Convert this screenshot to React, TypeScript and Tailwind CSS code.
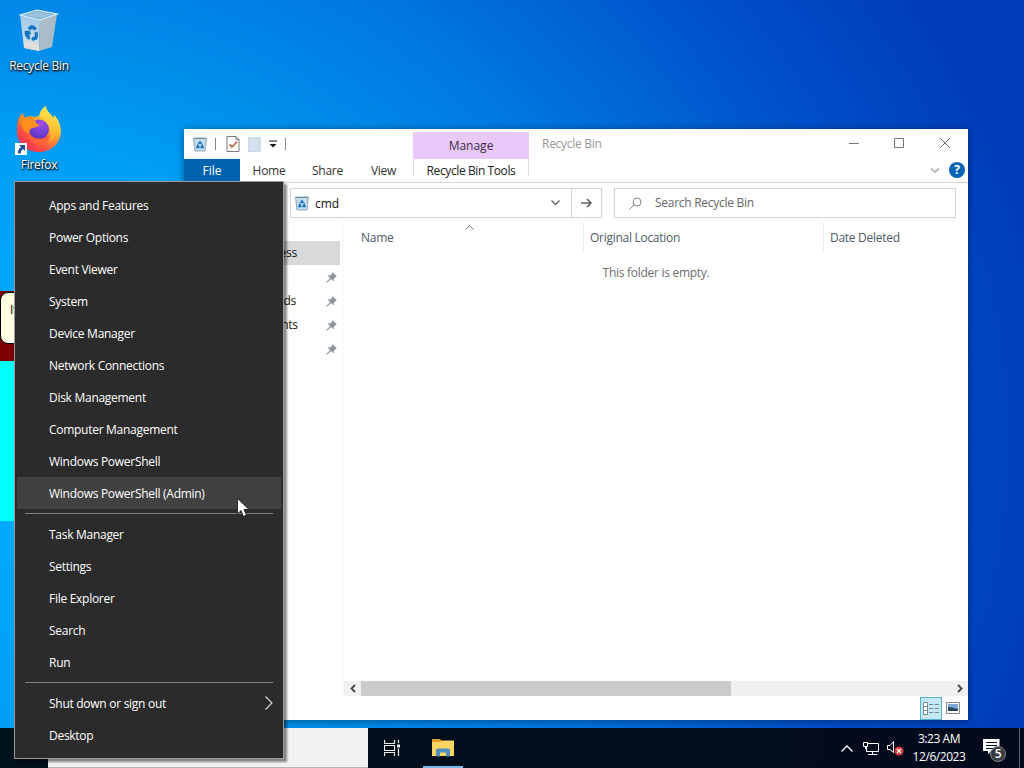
import type { ReactNode } from 'react';

type MenuRow = { label: string; active?: boolean; submenu?: boolean };

const menuGroups: MenuRow[][] = [
  [
    { label: 'Apps and Features' },
    { label: 'Power Options' },
    { label: 'Event Viewer' },
    { label: 'System' },
    { label: 'Device Manager' },
    { label: 'Network Connections' },
    { label: 'Disk Management' },
    { label: 'Computer Management' },
    { label: 'Windows PowerShell' },
    { label: 'Windows PowerShell (Admin)', active: true },
  ],
  [
    { label: 'Task Manager' },
    { label: 'Settings' },
    { label: 'File Explorer' },
    { label: 'Search' },
    { label: 'Run' },
  ],
  [{ label: 'Shut down or sign out', submenu: true }, { label: 'Desktop' }],
];

const pinned = ['Desktop', 'Downloads', 'Documents', 'Pictures'];

const RecycleBinIcon = () => (
  <svg width="40" height="44" viewBox="0 0 40 44">
    <defs>
      <linearGradient id="binFront" x1="0" y1="0" x2="0" y2="1">
        <stop offset="0" stopColor="#9cc9e8" />
        <stop offset="0.6" stopColor="#c3d9e6" />
        <stop offset="1" stopColor="#d6dadb" />
      </linearGradient>
    </defs>
    <path d="M1 6 L21 11 L20 42 L5 39 Z" fill="url(#binFront)" />
    <path d="M21 11 L38 5 L33 38 L20 42 Z" fill="#a9bcc8" />
    <path d="M1 6 L18 1 L38 5 L21 11 Z" fill="#79b4dc" stroke="#e2eff7" strokeWidth="1.1" />
    <path d="M6 6 L18 3 L33 5.400 L21 9 Z" fill="#9cc3dc" />
    <path d="M5 32 L20 35 L20 42 L5 39 Z" fill="#e3e1dd" opacity="0.7" />
    <g fill="#1674c5">
      <path d="M8.500 19 L12 16 L16 17 L18 20 L15 21.500 L13 19.500 L11.500 21.500 Z" />
      <path d="M5.500 22 L10.500 21.500 L12.500 25.500 L10.300 25 L11.300 30 L9 30.500 L6 26.500 Z" />
      <path d="M13 28.500 L16 27 L15.500 23.500 L18.500 22.500 L19 27.500 L17.500 31 L15 31 L15 32.500 L12.300 30.500 Z" />
    </g>
  </svg>
);

const FirefoxIcon = () => (
  <svg width="48" height="50" viewBox="0 0 48 50">
    <defs>
      <linearGradient id="fxBody" x1="0.85" y1="0.1" x2="0.2" y2="0.95">
        <stop offset="0" stopColor="#fff44f" />
        <stop offset="0.3" stopColor="#ffbd2e" />
        <stop offset="0.58" stopColor="#ff7139" />
        <stop offset="0.85" stopColor="#fb4048" />
        <stop offset="1" stopColor="#ee2a62" />
      </linearGradient>
      <radialGradient id="fxGlobe" cx="0.6" cy="0.2" r="0.8">
        <stop offset="0" stopColor="#a24ce0" />
        <stop offset="0.6" stopColor="#7542d5" />
        <stop offset="1" stopColor="#5a2fc0" />
      </radialGradient>
      <linearGradient id="fxFlame" x1="0.5" y1="0" x2="0.5" y2="1">
        <stop offset="0" stopColor="#ffe94a" />
        <stop offset="1" stopColor="#ffa42b" />
      </linearGradient>
    </defs>
    <path
      d="M3 15 C4 12 6 10 8 8 C8 10 9 12 10 13 C13 11 16 11 19 12 C22 12 24 11 24.500 10 C25 6 28 3 30.500 1 C31 5 34 8 37 11 L38 14 L39 10 C43 14 46 20 46 27 C45 39 36 47 24 47 C11 47 2 38 2 26 C2 22 2 18 3 15 Z"
      fill="url(#fxBody)"
    />
    <path d="M24.500 11 C25 6 28 3 30.500 1 C31 7 39 10 41 19 C43 28 39 35 33 39 C37 32 37 23 31 17 C29 14 26 14 24.500 11 Z" fill="url(#fxFlame)" opacity="0.85" />
    <circle cx="24" cy="24.500" r="10" fill="url(#fxGlobe)" />
    <path d="M4 14 L8 9 C9 12 11 14 14 14 L17 10 C17 13 18 15 21 16 C20 17 21 19 25 20 C22 22 20 23 17 23 C14 25 14 27 14 29 C9 27 5 20 4 14 Z" fill="#ff8f20" />
    <path d="M13 26 C16 34 27 37 35 29 C33 38 26 41 20 39 C16 37 13 32 13 26 Z" fill="#ff6236" />
  </svg>
);

const SmallBin = () => (
  <svg width="14" height="15" viewBox="0 0 14 15">
    <path d="M0.500 1 H13.500 L12 14 H2 Z" fill="#c4dbe9" stroke="#8eaabd" />
    <path d="M1 1.500 H13" stroke="#6c8ea6" />
    <path d="M5 7 L7 4 L9 7 L7.500 7 L7 6 L6.500 7 Z M3.500 11 L4.500 7.500 L6.300 9 L5.500 9.800 L6.500 11 Z M10.500 11 L9.500 7.500 L7.800 9 L8.500 9.800 L7.500 11 Z" fill="#0d6ebd" stroke="#0d6ebd" strokeWidth="0.5" />
  </svg>
);

const Pin = () => (
  <svg width="11" height="11" viewBox="0 0 11 11">
    <path d="M6.500 0 L11 4.500 L9.500 5 L7.800 6.800 L7.500 9.500 L5 7 L1 10.800 L0.300 10 L4 6 L1.500 3.500 L4.500 3.200 L6.200 1.500 Z" fill="#8b969b" />
  </svg>
);

const DesktopIcon = ({ label, children }: { label: string; children: ReactNode }) => (
  <div className="flex w-[78px] flex-col items-center">
    {children}
    <span className="text-[12px] leading-4 whitespace-nowrap text-white [text-shadow:1px_1px_2px_#000,0_1px_2px_#000]">
      {label}
    </span>
  </div>
);

const TitleBar = () => (
  <div className="flex h-[30px] shrink-0 items-stretch">
    <div className="flex w-[229px] items-center pl-[9px]">
      <SmallBin />
      <span className="ml-2 h-3 w-px bg-[#888]" />
      <svg className="ml-[10px]" width="14" height="16" viewBox="0 0 14 16">
        <path d="M1 0.500 H10 L13 3.500 V15.500 H1 Z" fill="#fff" stroke="#7b7b7b" />
        <path d="M10 0.500 V3.500 H13" fill="none" stroke="#7b7b7b" />
        <path d="M3.500 8.500 L6 11 L11 5.500" fill="none" stroke="#cc6b45" strokeWidth="1.8" />
      </svg>
      <span className="ml-2 h-[15px] w-[13px] border border-[#c9d9e6] bg-[#d3e1ee]" />
      <svg className="ml-[8px]" width="8" height="8" viewBox="0 0 8 8">
        <path d="M0 1 H8" stroke="#111" />
        <path d="M0.500 4 H7.500 L4 7.500 Z" fill="#111" />
      </svg>
      <span className="ml-2 h-3 w-px bg-[#888]" />
    </div>
    <div className="mt-[3px] flex w-[116px] items-center justify-center bg-[#e9c9fa] pt-px tracking-normal text-[#3c2b46]">
      Manage
    </div>
    <div className="flex flex-1 items-center pl-[13px] text-[#999]">Recycle Bin</div>
    <svg width="104" height="12" viewBox="0 0 104 12" className="mt-2 mr-[16px]" fill="none" stroke="#777">
      <path d="M1 6.500 H11 M46.500 1.500 H55.500 V10.500 H46.500 Z M92 1 L102 11 M102 1 L92 11" />
    </svg>
  </div>
);

const RibbonTabs = () => (
  <div className="flex h-[24px] shrink-0 border-b border-[#d5d5d5] text-[#333]">
    <div className="flex h-[24px] w-[56px] items-center justify-center bg-[#0463b0] tracking-normal text-white">File</div>
    <div className="flex w-[58px] items-center justify-center">Home</div>
    <div className="flex w-[59px] items-center justify-center">Share</div>
    <div className="flex w-[56px] items-center pl-[14px]">View</div>
    <div className="flex h-[17px] w-[116px] items-center justify-center border-x border-[#e3d6e8] tracking-[-0.4px] whitespace-nowrap text-[#222]">
      <span className="pt-[7px]">Recycle Bin Tools</span>
    </div>
    <div className="flex flex-1 items-center justify-end gap-[9px] pr-[3px]">
      <svg width="10" height="7" viewBox="0 0 10 7" fill="none" stroke="#b8b8b8" strokeWidth="1.8">
        <path d="M1 1.500 L5 5 L9 1.500" />
      </svg>
      <div className="mb-px flex size-4 items-center justify-center rounded-full bg-[#0664b4] text-[12px] font-bold text-white">?</div>
    </div>
  </div>
);

const AddressRow = () => (
  <div className="mt-[5px] flex h-[30px] shrink-0 pr-3 pl-[106px]">
    <div className="flex w-[312px] border border-[#d4d4d4]">
      <div className="flex flex-1 items-center pl-[4px] text-[#111]">
        <SmallBin />
        <span className="ml-[6px] flex-1 pt-[2px] tracking-normal">cmd</span>
        <svg className="mr-[11px]" width="9" height="6" viewBox="0 0 9 6" fill="none" stroke="#555" strokeWidth="1.2">
          <path d="M0.500 0.500 L4.500 4.500 L8.500 0.500" />
        </svg>
      </div>
      <div className="flex w-[30px] items-center justify-center border-l border-[#d4d4d4]">
        <svg width="12" height="10" viewBox="0 0 12 10" fill="none" stroke="#666" strokeWidth="1.7">
          <path d="M0 5 H10 M6 1 L10 5 L6 9" />
        </svg>
      </div>
    </div>
    <div className="ml-3 flex flex-1 items-center border border-[#d4d4d4] text-[#666]">
      <svg className="ml-[14px]" width="13" height="13" viewBox="0 0 13 13" fill="none" stroke="#888">
        <circle cx="8" cy="5" r="4" />
        <path d="M5 8 L0.500 12.500" />
      </svg>
      <span className="ml-[13px]">Search Recycle Bin</span>
    </div>
  </div>
);

const NavPane = () => (
  <div className="w-[160px] shrink-0 border-r border-[#fafafa] pt-[19px]">
    <div className="flex h-6 w-[156px] items-center bg-[#d9d9d9] pl-[45px] text-[#111]">Quick access</div>
    {pinned.map((name) => (
      <div key={name} className="flex h-6 w-[156px] items-center justify-between pr-[3px] pl-[52px] text-[#111]">
        <span>{name}</span>
        <Pin />
      </div>
    ))}
  </div>
);

const FileList = () => (
  <div className="flex min-w-0 flex-1 flex-col">
    <div className="flex h-[31px] shrink-0 text-[#4c5a67]">
      <div className="relative flex w-[240px] items-center border-r border-[#eee] pl-[17px]">
        Name
        <svg className="absolute top-[3px] left-[121px]" width="9" height="5" viewBox="0 0 9 5" fill="none" stroke="#777">
          <path d="M0.500 4.500 L4.500 0.500 L8.500 4.500" />
        </svg>
      </div>
      <div className="flex w-[240px] items-center border-r border-[#eee] pl-[6px]">Original Location</div>
      <div className="flex items-center pl-[6px]">Date Deleted</div>
    </div>
    <div className="flex-1 pt-3 text-center text-[#6d6d6d]">This folder is empty.</div>
    <div className="flex h-[15px] shrink-0 items-center bg-[#f0f0f0]">
      <div className="flex w-[17px] justify-center">
        <svg width="6" height="9" viewBox="0 0 6 9" fill="none" stroke="#444" strokeWidth="1.800">
          <path d="M5 1 L1.500 4.500 L5 8" />
        </svg>
      </div>
      <div className="h-full w-[370px] bg-[#cbcbcb]" />
      <svg className="mr-[5px] ml-auto" width="6" height="9" viewBox="0 0 6 9" fill="none" stroke="#444" strokeWidth="1.800">
        <path d="M1 1 L4.500 4.500 L1 8" />
      </svg>
    </div>
  </div>
);

const StatusBar = () => (
  <div className="flex h-[24px] shrink-0 items-center justify-end pr-2">
    <div className="flex h-[23px] w-[22px] items-center justify-center border border-[#54b0d0] bg-[#c4e9f5]">
      <svg width="16" height="13" viewBox="0 0 16 13" fill="none" stroke="#758691">
        <path d="M0.500 0.500 H4.500 V12.500 H0.500 Z M0.500 4.500 H4.500 M0.500 8.500 H4.500" fill="#fff" />
        <path d="M6 2.500 H10 M11.500 2.500 H16 M6 6.500 H10 M11.500 6.500 H16 M6 10.500 H10 M11.500 10.500 H16" />
      </svg>
    </div>
    <svg className="ml-1" width="14" height="12" viewBox="0 0 14 12">
      <path d="M0.500 0.500 H13.500 V11.500 H0.500 Z" fill="#fff" stroke="#888" />
      <path d="M2 2 H12 V9 H2 Z" fill="#78a9d4" />
      <path d="M2 5 L6 5.500 L12 7 V9 H2 Z" fill="#29485f" />
    </svg>
  </div>
);

const ExplorerWindow = () => (
  <div className="absolute top-[129px] left-[184px] flex h-[591px] w-[784px] flex-col bg-white shadow-[0_1px_8px_rgba(0,0,0,0.4)]">
    <TitleBar />
    <RibbonTabs />
    <AddressRow />
    <div className="flex min-h-0 flex-1 pt-1">
      <NavPane />
      <FileList />
    </div>
    <StatusBar />
  </div>
);

const QuickMenu = () => (
  <div className="absolute top-[181px] left-[14px] w-[270px] border border-[#9a9a9a] bg-[#2b2b2b] px-[2px] py-[7px] text-white shadow-[3px_3px_2px_rgba(0,0,0,0.45)]">
    {menuGroups.map((group, index) => (
      <div key={group[0].label}>
        {index > 0 && <div className="mx-2 mt-1 mb-1 h-px bg-[#808080]" />}
        {group.map((row) => (
          <div
            key={row.label}
            className={`flex h-8 items-center justify-between pr-2 pl-8 ${row.active ? 'bg-[#414141]' : ''}`}
          >
            <span className="pt-px">{row.label}</span>
            {row.submenu && (
              <svg width="8" height="14" viewBox="0 0 8 14" fill="none" stroke="#ddd" strokeWidth="1.1">
                <path d="M0.500 0.500 L7 7 L0.500 13.500" />
              </svg>
            )}
          </div>
        ))}
      </div>
    ))}
  </div>
);

const Taskbar = () => (
  <div className="absolute top-[728px] left-0 flex h-10 w-[1024px] bg-linear-to-r from-[#00121c] to-[#020a1c] text-white">
    <div className="ml-12 w-[320px] border-b border-[#b5b5b5] bg-[#f2f2f2]" />
    <div className="flex w-12 items-center justify-center">
      <svg width="16" height="16" viewBox="0 0 16 16" fill="none" stroke="#eee" strokeWidth="1.2">
        <path d="M0.500 0 V3.500 H10.500 V0 M0.500 16 V12.500 H10.500 V16 M0.500 5.500 H10.500 V10.500 H0.500 Z M14.500 0 V3 M14.500 8.500 V16" />
        <path d="M13 4.500 H16 V7.500 H13 Z" fill="#eee" stroke="none" />
      </svg>
    </div>
    <div className="ml-[7px] flex w-10 items-center justify-center border-b-2 border-[#76b9ed]">
      <svg width="22" height="19" viewBox="0 0 22 19">
        <path d="M0 1 H8 L10 3 H22 V18 H0 Z" fill="#e0a030" />
        <path d="M0 4 H8 L10 2.500 H22 V18 H0 Z" fill="#fad564" />
        <path d="M4 18.500 V12 Q4 10.500 6 10.500 H16 Q18 10.500 18 12 V18.500 H14 V14.500 H8 V18.500 Z" fill="#4d8fbd" />
      </svg>
    </div>
    <div className="ml-auto flex items-center">
      <svg width="12" height="7" viewBox="0 0 12 7" fill="none" stroke="#fff" strokeWidth="1.3">
        <path d="M0.500 6.500 L6 1 L11.500 6.500" />
      </svg>
      <svg className="ml-[10px]" width="17" height="15" viewBox="0 0 17 15" fill="none" stroke="#fff">
        <path d="M5 2.500 H15.500 V10.500 H3.500 V6 M9.500 10.500 V13.500 M5 13.500 H14 M0.500 1.500 H4.500 V5.500 H0.500 Z M2.500 5.500 V8" />
      </svg>
      <svg className="ml-[7px]" width="17" height="16" viewBox="0 0 17 16" fill="none">
        <path d="M0.500 5.500 H3 L6.500 1.500 V12.500 L3 9.500 H0.500 Z" stroke="#fff" />
        <circle cx="12" cy="11" r="4.500" fill="#d93a3a" />
        <path d="M10 9 L14 13 M14 9 L10 13" stroke="#fff" strokeWidth="1.2" />
      </svg>
      <div className="ml-[8px] w-[54px] text-center leading-[18px] tracking-[-0.45px] whitespace-nowrap">
        <div>3:23 AM</div>
        <div>12/6/2023</div>
      </div>
      <div className="relative ml-[17px] h-5 w-6">
        <svg width="17" height="17" viewBox="0 0 17 17">
          <path d="M0 1 H16.500 V13 H8 L5 16.500 V13 H0 Z" fill="#fff" />
          <path d="M3 4.500 H14 M3 7.500 H14 M3 10.500 H10" stroke="#06101c" />
        </svg>
        <span className="absolute top-[8px] left-[7px] flex size-4 items-center justify-center rounded-full border border-[#888] bg-[#353c43] text-[12px] font-semibold">
          5
        </span>
      </div>
      <div className="ml-3 h-10 w-px bg-[#5b626c]" />
      <div className="w-1" />
    </div>
  </div>
);

const App = () => {
  return (
    <div className="relative h-[768px] w-[1024px] overflow-hidden bg-[radial-gradient(1080px_900px_at_0px_440px,#00adff_0%,#009ff6_32%,#0077df_60%,#004fc9_82%,#003bb8_100%)] font-['Open_Sans','Noto_Sans',sans-serif] text-[12px] leading-4 tracking-[-0.28px]">
      {/* desktop icons */}
      <div className="flex flex-col gap-[30px] pt-[9px]">
        <DesktopIcon label="Recycle Bin">
          <div className="mb-[5px]">
            <RecycleBinIcon />
          </div>
        </DesktopIcon>
        <DesktopIcon label="Firefox">
          <div className="relative mt-px mb-[2px]">
            <FirefoxIcon />
            <svg className="absolute bottom-0 left-0" width="12" height="12" viewBox="0 0 12 12">
              <path d="M0 0 H12 V12 H0 Z" fill="#fff" />
              <path d="M4 2 H10 V8 L8 6 Q5.500 8 5.500 10.500 H3 Q2.500 6.500 6 4 Z" fill="#244f9e" />
            </svg>
          </div>
        </DesktopIcon>
      </div>

      {/* window left open behind the menu */}
      <div className="absolute top-[291px] left-0 h-[230px] w-16 bg-[#00ffff]">
        <div className="h-[70px] bg-[#7d0000] pt-px">
          <div className="h-[52px] w-16 rounded-lg border border-black bg-[#ffffe5] pt-[9px] pl-[9px] text-black">It</div>
        </div>
      </div>

      <ExplorerWindow />
      <Taskbar />
      <QuickMenu />

      <svg className="absolute top-[498px] left-[237px]" width="13" height="20" viewBox="0 0 13 20">
        <path d="M0.500 0.500 V16 L4 12.500 L6.500 18.500 L9.500 17.200 L7 11.500 H12 Z" fill="#fff" stroke="#111" strokeWidth="0.8" />
      </svg>
    </div>
  );
};

export default App;
